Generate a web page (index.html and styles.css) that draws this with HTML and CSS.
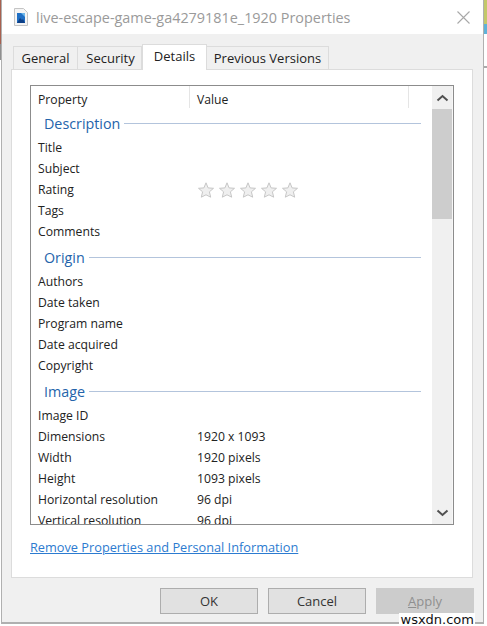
FILE: index.html
```html
<!DOCTYPE html>
<html lang="en">
<head>
<meta charset="utf-8">
<title>Properties</title>
<link rel="stylesheet" href="styles.css">
</head>
<body>
<div class="window">
  <header class="titlebar">
    <svg class="file-icon" width="14" height="18" viewBox="0 0 14 18">
      <path d="M.5.5h9l4 4v13H.5z" fill="#f4f4f4" stroke="#c4c4c4"/>
      <path d="M3 5h8v10H3z" fill="#1f6fc4"/>
      <path d="M3 15l3-5 2 2 1-1 2 4z" fill="#0d3f86"/>
      <path d="M7 5h4v4z" fill="#6db7ea"/>
    </svg>
    <span class="title">live-escape-game-ga4279181e_1920 Properties</span>
    <svg class="close" width="13" height="13" viewBox="0 0 13 13"><path d="M.5.5l12 12M12.5.5l-12 12" stroke="#a8a8a8" stroke-width="1.1" fill="none"/></svg>
  </header>
  <div class="content">
    <nav class="tabs">
      <span class="tab tab-general">General</span>
      <span class="tab tab-security">Security</span>
      <span class="tab tab-active">Details</span>
      <span class="tab tab-versions">Previous Versions</span>
    </nav>
    <section class="panel">
      <div class="listbox">
        <div class="list">
          <div class="list-head">
            <span class="col-prop">Property</span>
            <span class="col-val">Value</span>
            <span class="col-rest"></span>
          </div>
          <h2 class="group"><span>Description</span><i></i></h2>
          <div class="row"><span>Title</span></div>
          <div class="row"><span>Subject</span></div>
          <div class="row"><span>Rating</span>
            <span class="stars">
              <svg width="16" height="16" viewBox="0 0 16 16"><path class="star" d="M8 .8l2.1 5.1 5.4.4-4.1 3.5 1.3 5.4L8 12.8l-4.7 2.4 1.3-5.4L.5 6.3l5.4-.4z"/></svg>
              <svg width="16" height="16" viewBox="0 0 16 16"><path class="star" d="M8 .8l2.1 5.1 5.4.4-4.1 3.5 1.3 5.4L8 12.8l-4.7 2.4 1.3-5.4L.5 6.3l5.4-.4z"/></svg>
              <svg width="16" height="16" viewBox="0 0 16 16"><path class="star" d="M8 .8l2.1 5.1 5.4.4-4.1 3.5 1.3 5.4L8 12.8l-4.7 2.4 1.3-5.4L.5 6.3l5.4-.4z"/></svg>
              <svg width="16" height="16" viewBox="0 0 16 16"><path class="star" d="M8 .8l2.1 5.1 5.4.4-4.1 3.5 1.3 5.4L8 12.8l-4.7 2.4 1.3-5.4L.5 6.3l5.4-.4z"/></svg>
              <svg width="16" height="16" viewBox="0 0 16 16"><path class="star" d="M8 .8l2.1 5.1 5.4.4-4.1 3.5 1.3 5.4L8 12.8l-4.7 2.4 1.3-5.4L.5 6.3l5.4-.4z"/></svg>
            </span>
          </div>
          <div class="row"><span>Tags</span></div>
          <div class="row"><span>Comments</span></div>
          <h2 class="group"><span>Origin</span><i></i></h2>
          <div class="row"><span>Authors</span></div>
          <div class="row"><span>Date taken</span></div>
          <div class="row"><span>Program name</span></div>
          <div class="row"><span>Date acquired</span></div>
          <div class="row"><span>Copyright</span></div>
          <h2 class="group"><span>Image</span><i></i></h2>
          <div class="row"><span>Image ID</span></div>
          <div class="row"><span>Dimensions</span><span>1920 x 1093</span></div>
          <div class="row"><span>Width</span><span>1920 pixels</span></div>
          <div class="row"><span>Height</span><span>1093 pixels</span></div>
          <div class="row"><span>Horizontal resolution</span><span>96 dpi</span></div>
          <div class="row"><span>Vertical resolution</span><span>96 dpi</span></div>
        </div>
        <div class="scrollbar">
          <svg class="arrow" width="13" height="8" viewBox="0 0 13 8"><path d="M1.5 6.5l5-4.5 5 4.5" fill="none" stroke="#505050" stroke-width="2"/></svg>
          <div class="thumb"></div>
          <div class="track"></div>
          <svg class="arrow" width="13" height="8" viewBox="0 0 13 8"><path d="M1.5 1.5l5 4.5 5-4.5" fill="none" stroke="#505050" stroke-width="2"/></svg>
        </div>
      </div>
      <a class="link" href="#">Remove Properties and Personal Information</a>
    </section>
    <footer class="buttons">
      <span class="btn">OK</span>
      <span class="btn">Cancel</span>
      <span class="btn btn-disabled"><u>A</u>pply</span>
    </footer>
  </div>
</div>
<span class="watermark">wsxdn.com</span>
</body>
</html>
```
FILE: styles.css
```css
* { box-sizing: border-box; }
html, body { margin: 0; height: 100%; }
body {
  width: 487px;
  height: 626px;
  overflow: hidden;
  position: relative;
  background:
    linear-gradient(#a8604f 0 44px, #8f8f8f 44px 60px, #fff 60px) left top / 1px 100% no-repeat,
    linear-gradient(#c3c86a 0 24px, #5fb2d8 24px 34px, #fff 34px 66px, #aaa 66px 68px, #fff 68px) right top / 3px 100% no-repeat,
    #fff;
  font-family: "Open Sans", "Liberation Sans", sans-serif;
  color: #222;
}
.window {
  width: 483px;
  height: 624px;
  margin-left: 1px;
  border: 1px solid #b0b0b0;
  border-top: 0;
  border-bottom-width: 2px;
  display: flex;
  flex-direction: column;
  background: #f0f0f0;
}
.titlebar {
  height: 34px;
  background: #fff;
  display: flex;
  align-items: center;
  padding: 0 13px 0 12px;
}
.file-icon { flex: none; margin: 0 8px 0 0; }
.title { font-size: 14.4px; color: #9a9a9a; flex: 1; white-space: nowrap; }
.close { flex: none; }
.content { flex: 1; display: flex; flex-direction: column; padding: 0 9px; }
.tabs {
  height: 35px;
  display: flex;
  align-items: flex-end;
  padding: 0 0 0 2px;
  font-size: 13px;
}
.tab {
  height: 23px;
  display: flex;
  align-items: center;
  justify-content: center;
  background: #f0f0f0;
  border: 1px solid #dcdcdc;
  border-bottom: 0;
  border-left-width: 0;
}
.tab-general { width: 65px; border-left-width: 1px; }
.tab-security { width: 64px; padding-left: 2px; }
.tab-active {
  width: 65px;
  height: 26px;
  background: #fff;
  border-left-width: 1px;
  margin-bottom: -1px;
  position: relative;
  padding: 0 0 4px;
}
.tab-versions { width: 122px; }
.panel {
  width: 462px;
  height: 509px;
  background: #fff;
  border: 1px solid #dcdcdc;
  padding: 15px 18px 0;
}
.listbox {
  width: 424px;
  height: 440px;
  border: 1px solid #8c8c8c;
  display: flex;
  overflow: hidden;
}
.list { flex: 1; min-width: 0; padding-left: 7px; font-size: 12.2px; }
.list-head { height: 22px; display: flex; align-items: center; margin-left: -7px; padding-left: 7px; }
.list-head span { height: 100%; display: flex; align-items: center; padding-top: 5px; }
.col-prop { width: 152px; border-right: 1px solid #e5e5e5; }
.col-val { width: 219px; padding-left: 7px; border-right: 1px solid #e5e5e5; }
.group {
  margin: 4px 0 0;
  height: 25px;
  display: flex;
  align-items: center;
  gap: 4px;
  padding: 0 11px 2px 6px;
  font-size: 14.3px;
  font-weight: 400;
  color: #2464ab;
}
.group i { flex: 1; height: 1px; background: #b3c4dc; }
.row { height: 21px; display: flex; align-items: center; white-space: nowrap; }
.row > span:first-child { width: 159px; flex: none; }
.stars { display: flex; gap: 5px; margin-left: 1px; }
.star { fill: #efefef; stroke: #c6c6c6; stroke-width: 1; }
.scrollbar {
  width: 21px;
  flex: none;
  display: flex;
  flex-direction: column;
  align-items: center;
  background: #f0f0f0;
  border-right: 1px solid #f7f7f7;
}
.arrow { flex: none; margin: 8px 0 7px; }
.thumb { width: 100%; height: 110px; flex: none; background: #cdcdcd; }
.track { flex: 1; }
.link {
  display: block;
  margin: 13px 0 0;
  font-size: 12.75px;
  color: #2c7bd0;
  text-decoration: underline;
  white-space: nowrap;
}
.buttons {
  display: flex;
  justify-content: flex-end;
  gap: 10px;
  padding: 10px 0 0;
}
.btn {
  width: 98px;
  height: 26px;
  display: flex;
  align-items: center;
  justify-content: center;
  background: #e1e1e1;
  border: 1px solid #adadad;
  font-size: 13px;
  color: #333;
}
.btn-disabled { background: #cccccc; border-color: #cccccc; color: #8f8f8f; display: block; text-align: center; line-height: 24px; }
.watermark {
  position: absolute;
  right: 12px;
  bottom: 0;
  height: 13px;
  padding: 0 1px 0 2px;
  background: #fff;
  font: 13px/13px "DejaVu Sans", sans-serif;
  color: #111;
}
```
